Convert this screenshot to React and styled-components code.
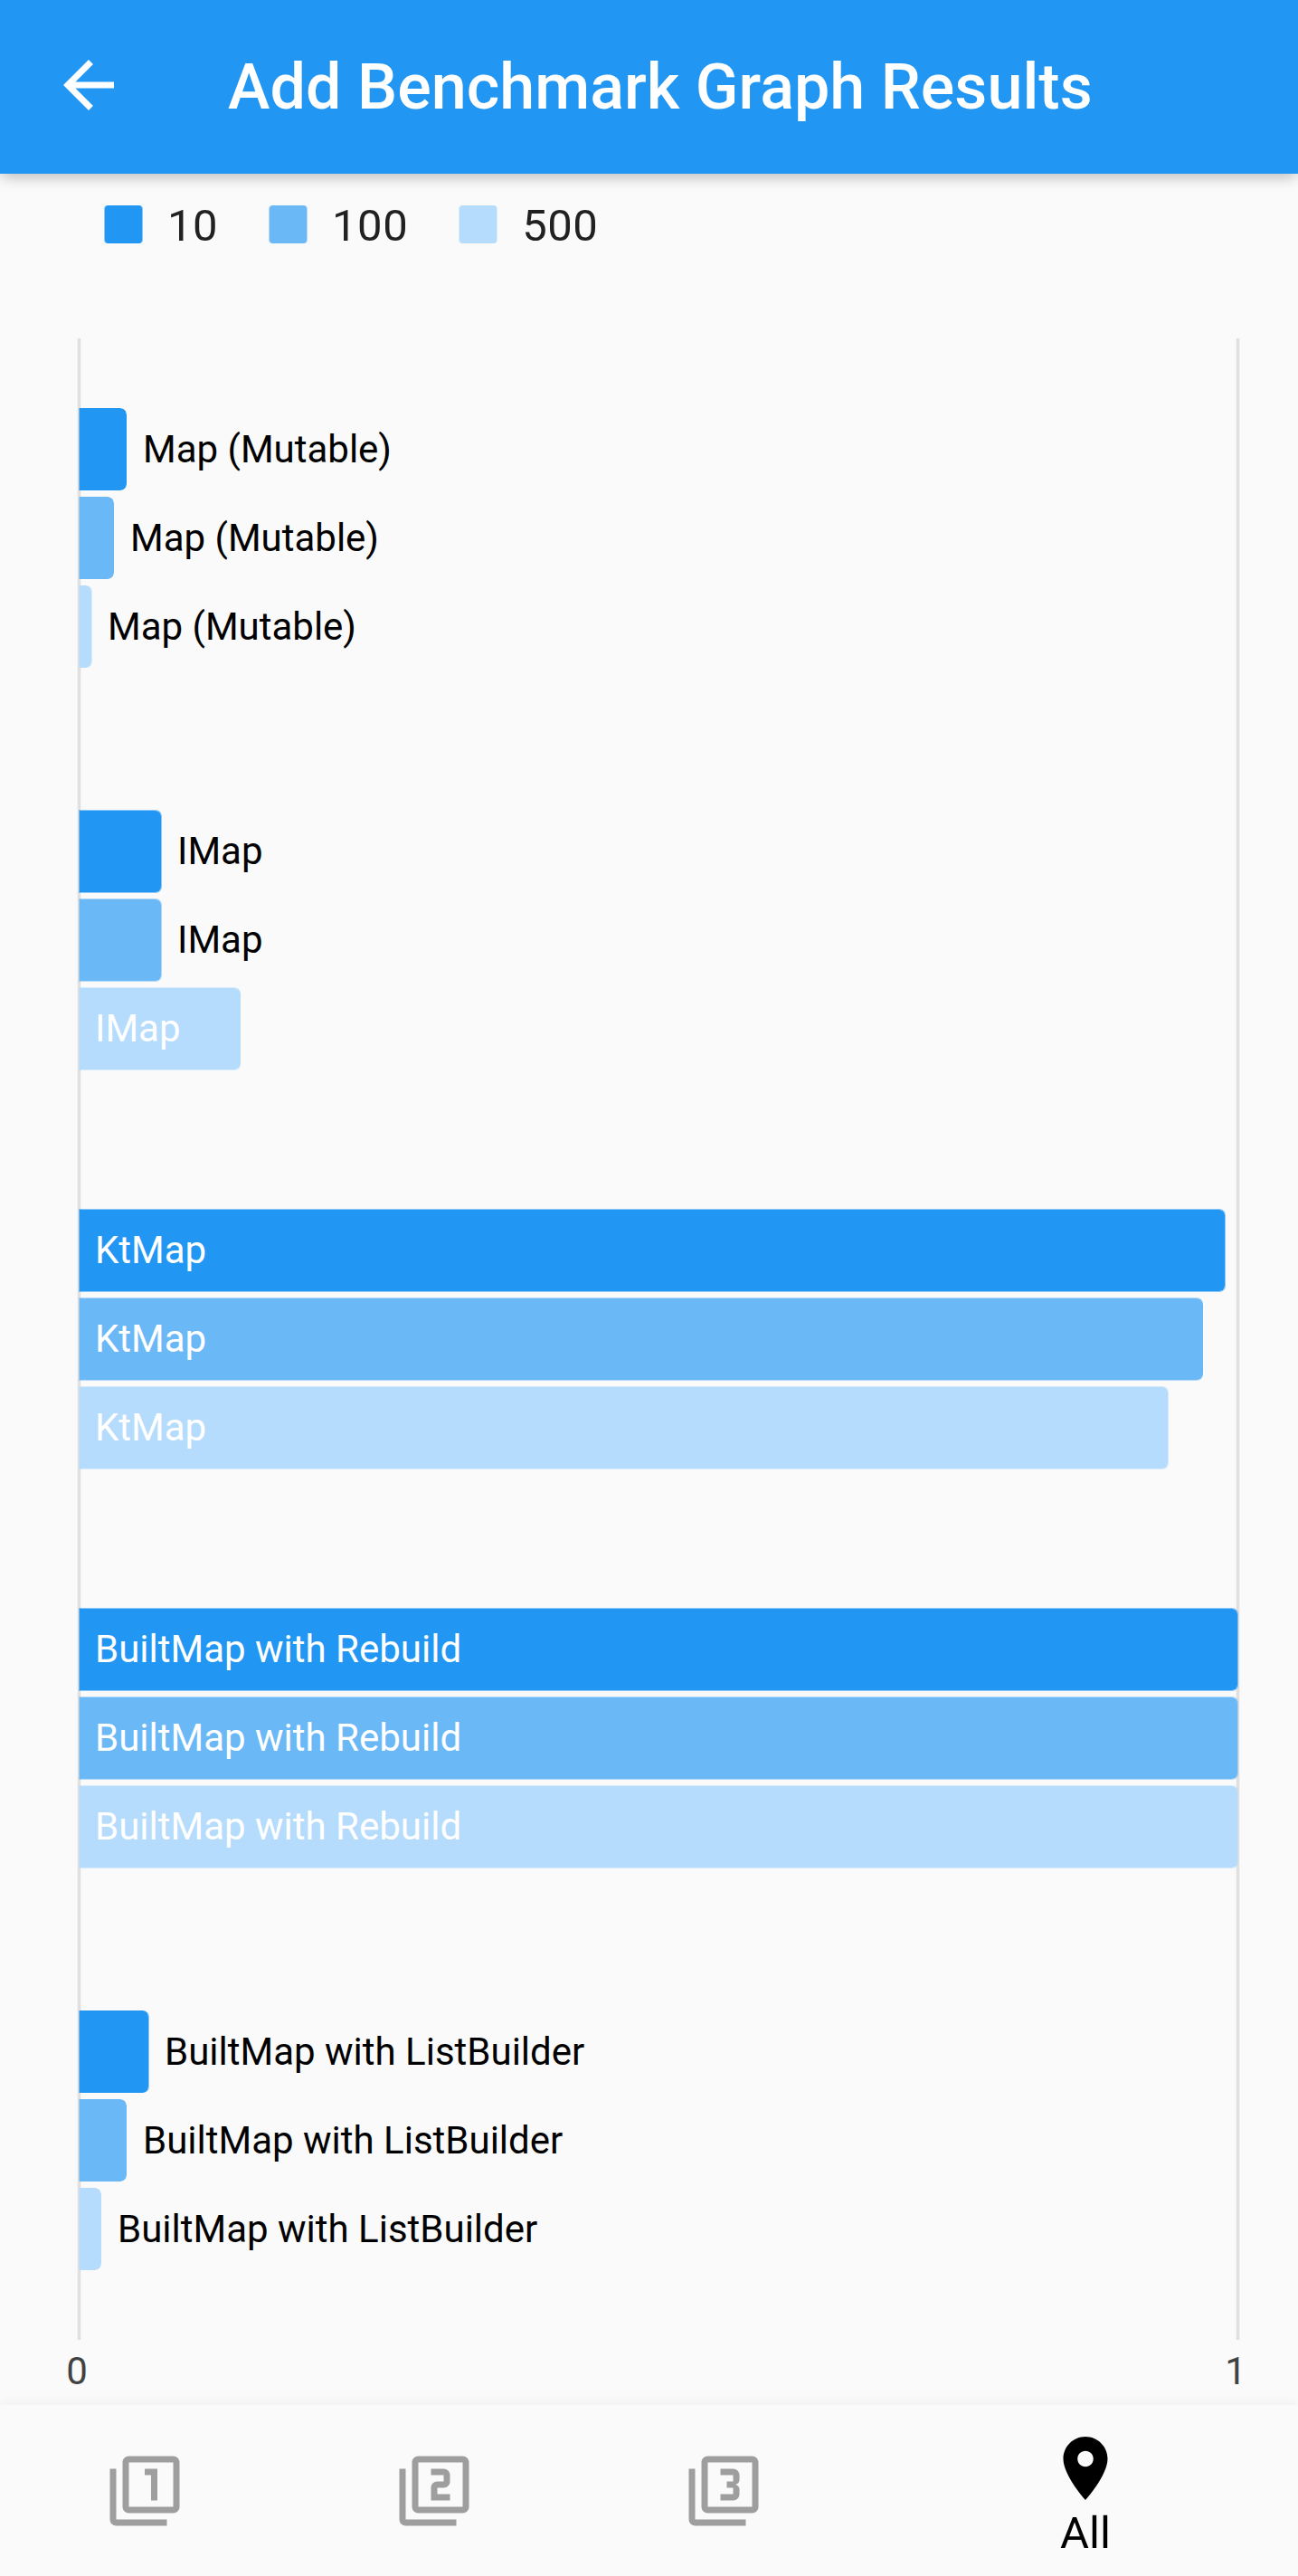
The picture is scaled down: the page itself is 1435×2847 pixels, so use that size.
import React from "react";
import styled, { createGlobalStyle } from "styled-components";

const GlobalStyle = createGlobalStyle`
  html, body { margin: 0; padding: 0; background: #fafafa; }
  * { box-sizing: border-box; }
`;

const Page = styled.div`
  width: 1435px;
  height: 2847px;
  overflow: hidden;
  display: flex;
  flex-direction: column;
  background: #fafafa;
  font-family: Roboto, "Liberation Sans", sans-serif;
`;

const AppBar = styled.header`
  flex: none;
  height: 192px;
  padding: 0 0 4px 56px;
  display: flex;
  align-items: center;
  background: #2196f3;
  box-shadow: 0 7px 14px -3px rgba(0, 0, 0, 0.16), 0 4px 18px -1px rgba(0, 0, 0, 0.1);
`;

const Title = styled.h1`
  margin: 0 0 0 112px;
  padding-top: 4px;
  font-size: 70px;
  line-height: 82px;
  font-weight: 500;
  letter-spacing: 0.05px;
  color: #fff;
  white-space: nowrap;
`;

const Icon = styled.svg`
  display: block;
  flex: none;
  width: 84px;
  height: 84px;
  fill: ${(p) => p.$color};
`;

const Legend = styled.ul`
  flex: none;
  list-style: none;
  margin: 35px 0 0;
  padding: 0 0 0 115px;
  height: 42px;
  display: flex;
  align-items: center;
  gap: 56px;
`;

const LegendItem = styled.li`
  display: flex;
  align-items: center;
  gap: 27px;
  font-size: 49px;
  line-height: 58px;
  letter-spacing: 0.5px;
  color: #212121;
`;

const LegendText = styled.span`
  padding-top: 4px;
`;

const Swatch = styled.span`
  width: 43px;
  height: 42px;
  border: 0 solid rgba(${(p) => p.$tone}, 0.5);
  border-width: 0 1px;
  border-radius: 4px;
  background: rgb(${(p) => p.$tone});
  background-clip: padding-box;
`;

const Plot = styled.main`
  flex: none;
  width: 1286px;
  height: 2212px;
  margin: 105px 0 0 85px;
  padding: 77px 0 0 2px;
  --rule: linear-gradient(to right, #f3f3f3 1px, #e0e0e0 1px 4px, #f3f3f3 4px);
  background: var(--rule) left / 5px 100% no-repeat, var(--rule) right / 5px 100% no-repeat;
`;

const Group = styled.section`
  display: flex;
  flex-direction: column;
  gap: ${(p) => (p.$soft ? 6 : 7)}px;
  margin-bottom: ${(p) => p.$after}px;
`;

const Row = styled.div`
  display: flex;
  align-items: center;
  height: ${(p) => (p.$soft ? 92 : 91)}px;
`;

/* Half-covered edge pixels are drawn as half-transparent borders. */
const Bar = styled.div`
  flex: none;
  height: 100%;
  display: flex;
  align-items: center;
  border: 0 solid rgba(${(p) => p.$tone}, 0.5);
  border-left-width: 1px;
  border-right-width: ${(p) => (p.$softEnd ? 1 : 0)}px;
  border-top-width: ${(p) => (p.$soft ? 1 : 0)}px;
  border-bottom-width: ${(p) => (p.$soft ? 1 : 0)}px;
  border-radius: 0 7px 7px 0;
  background: rgb(${(p) => p.$tone});
  background-clip: padding-box;
`;

const Label = styled.span`
  font-size: 42px;
  line-height: 50px;
  white-space: nowrap;
  color: ${(p) => (p.$inside ? "#fff" : "#000")};
  margin-left: ${(p) => (p.$inside ? 17 : p.$afterSoftEnd ? 17 : 18)}px;
`;

const Axis = styled.div`
  flex: none;
  display: flex;
  justify-content: space-between;
  margin: 10px 0 0 73px;
  width: 1305px;
  font-size: 42px;
  line-height: 50px;
  color: #424242;
`;

const Tick = styled.span`
  width: 24px;
  text-align: center;
`;

const BottomNav = styled.nav`
  flex: none;
  margin-top: auto;
  height: 189px;
  display: flex;
  background: #fafafa;
  box-shadow: 0 0 14px rgba(0, 0, 0, 0.06);
`;

const Tab = styled.div`
  flex: 0 0 ${(p) => (p.$active ? 480 : 320)}px;
  display: flex;
  flex-direction: column;
  align-items: center;
  padding-top: ${(p) => (p.$active ? 28 : 53)}px;
  font-size: 49px;
  line-height: 60px;
  color: #000;
`;

const series = [
  { name: "10", tone: "33, 150, 243" },
  { name: "100", tone: "107, 184, 247" },
  { name: "500", tone: "181, 220, 252" },
];

const UNIT = 3.5;

const groups = [
  { label: "Map (Mutable)", values: [15, 11, 4], after: 157 },
  { label: "IMap", values: [26, 26, 51], soft: true, after: 153 },
  { label: "KtMap", values: [362, 355, 344], soft: true, after: 153 },
  { label: "BuiltMap with Rebuild", values: [366, 366, 366], soft: true, after: 157 },
  { label: "BuiltMap with ListBuilder", values: [22, 15, 7], after: 0 },
];

const paths = {
  back: "M20 11H7.83l5.59-5.59L12 4l-8 8 8 8 1.41-1.41L7.83 13H20v-2z",
  one: "M3 5H1v16c0 1.1.9 2 2 2h16v-2H3V5zm11 10h2V5h-4v2h2v8zm7-14H7c-1.1 0-2 .9-2 2v14c0 1.1.9 2 2 2h14c1.1 0 2-.9 2-2V3c0-1.1-.9-2-2-2zm0 16H7V3h14v14z",
  two: "M3 5H1v16c0 1.1.9 2 2 2h16v-2H3V5zm18-4H7c-1.1 0-2 .9-2 2v14c0 1.1.9 2 2 2h14c1.1 0 2-.9 2-2V3c0-1.1-.9-2-2-2zm0 16H7V3h14v14zm-4-4h-4v-2h2c1.1 0 2-.89 2-2V7c0-1.11-.9-2-2-2h-4v2h4v2h-2c-1.1 0-2 .89-2 2v4h6v-2z",
  three: "M21 1H7c-1.1 0-2 .9-2 2v14c0 1.1.9 2 2 2h14c1.1 0 2-.9 2-2V3c0-1.1-.9-2-2-2zm0 16H7V3h14v14zM3 5H1v16c0 1.1.9 2 2 2h16v-2H3V5zm14 8v-1.5c0-.83-.67-1.5-1.5-1.5.83 0 1.5-.67 1.5-1.5V7c0-1.11-.9-2-2-2h-4v2h4v2h-2v2h2v2h-4v2h4c1.1 0 2-.89 2-2z",
  pin: "M12 2C8.13 2 5 5.13 5 9c0 5.25 7 13 7 13s7-7.75 7-13c0-3.87-3.13-7-7-7zm0 9.5c-1.38 0-2.5-1.12-2.5-2.5s1.12-2.5 2.5-2.5 2.5 1.12 2.5 2.5-1.12 2.5-2.5 2.5z",
};

function Glyph({ name, color }) {
  return (
    <Icon viewBox="0 0 24 24" $color={color} aria-hidden="true">
      <path d={paths[name]} />
    </Icon>
  );
}

function BarRow({ label, value, tone, soft }) {
  const right = 0.5 + value * UNIT;
  const softEnd = right % 1 !== 0;
  const inside = value > 50;
  return (
    <Row $soft={soft}>
      <Bar $tone={tone} $soft={soft} $softEnd={softEnd} style={{ width: Math.ceil(right) }}>
        {inside && <Label $inside>{label}</Label>}
      </Bar>
      {!inside && <Label $afterSoftEnd={softEnd}>{label}</Label>}
    </Row>
  );
}

export default function App() {
  return (
    <>
      <GlobalStyle />
      <Page>
        <AppBar>
          <Glyph name="back" color="#fff" />
          <Title>Add Benchmark Graph Results</Title>
        </AppBar>
        <Legend>
          {series.map((s) => (
            <LegendItem key={s.name}>
              <Swatch $tone={s.tone} />
              <LegendText>{s.name}</LegendText>
            </LegendItem>
          ))}
        </Legend>
        <Plot>
          {groups.map((g) => (
            <Group key={g.label} $soft={g.soft} $after={g.after}>
              {g.values.map((v, i) => (
                <BarRow key={i} label={g.label} value={v} tone={series[i].tone} soft={g.soft} />
              ))}
            </Group>
          ))}
        </Plot>
        <Axis>
          <Tick>0</Tick>
          <Tick>1</Tick>
        </Axis>
        <BottomNav>
          <Tab><Glyph name="one" color="#9e9e9e" /></Tab>
          <Tab><Glyph name="two" color="#9e9e9e" /></Tab>
          <Tab><Glyph name="three" color="#9e9e9e" /></Tab>
          <Tab $active>
            <Glyph name="pin" color="#000" />
            All
          </Tab>
        </BottomNav>
      </Page>
    </>
  );
}
